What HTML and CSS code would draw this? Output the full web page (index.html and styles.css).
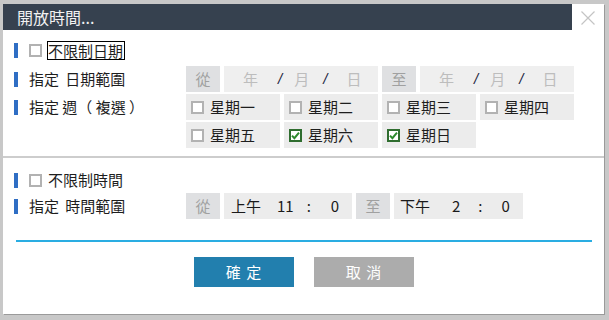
FILE: index.html
```html
<!DOCTYPE html>
<html lang="zh-Hant">
<head>
<meta charset="utf-8">
<title>開放時間</title>
<link rel="stylesheet" href="styles.css">
</head>
<body>
<div class="dialog">
  <div class="head">
    <div class="title">開放時間...</div>
    <div class="close">
      <svg width="16" height="16" viewBox="0 0 16 16"><path d="M1.5 1.5 L14.5 14.5 M14.5 1.5 L1.5 14.5" stroke="#c4c4c4" stroke-width="1.2" fill="none"/></svg>
    </div>
  </div>

  <div class="sec sec1">
    <div class="row">
      <div class="label"><i class="bar"></i><span class="cb"></span><span class="focus">不限制日期</span></div>
    </div>
    <div class="row r2">
      <div class="label"><i class="bar"></i><span class="wide">指定 日期範圍</span></div>
      <div class="fields">
        <div class="tag">從</div>
        <div class="date"><span class="ph y">年</span><span class="sl s1">/</span><span class="ph m">月</span><span class="sl s2">/</span><span class="ph d">日</span></div>
        <div class="tag">至</div>
        <div class="date"><span class="ph y">年</span><span class="sl s1">/</span><span class="ph m">月</span><span class="sl s2">/</span><span class="ph d">日</span></div>
      </div>
    </div>
    <div class="row r3">
      <div class="label"><i class="bar"></i><span>指定 週（ 複選 ）</span></div>
      <div class="weeks">
        <div class="wk"><span class="cb"></span>星期一</div>
        <div class="wk"><span class="cb"></span>星期二</div>
        <div class="wk"><span class="cb"></span>星期三</div>
        <div class="wk"><span class="cb"></span>星期四</div>
        <div class="wk"><span class="cb"></span>星期五</div>
        <div class="wk"><span class="cb on"><svg width="9" height="9" viewBox="0 0 9 9"><path d="M1 4.6 L3.4 7.2 L8 1.6" stroke="#2d8a2d" stroke-width="2" fill="none"/></svg></span>星期六</div>
        <div class="wk"><span class="cb on"><svg width="9" height="9" viewBox="0 0 9 9"><path d="M1 4.6 L3.4 7.2 L8 1.6" stroke="#2d8a2d" stroke-width="2" fill="none"/></svg></span>星期日</div>
      </div>
    </div>
  </div>

  <div class="sep"></div>

  <div class="sec sec2">
    <div class="row">
      <div class="label"><i class="bar"></i><span class="cb"></span><span class="plain">不限制時間</span></div>
    </div>
    <div class="row">
      <div class="label"><i class="bar"></i><span class="wide">指定 時間範圍</span></div>
      <div class="fields">
        <div class="tag">從</div>
        <div class="time t1"><span>上午</span><span class="hh">11</span><span class="co">:</span><span class="mm">0</span></div>
        <div class="tag">至</div>
        <div class="time t2"><span>下午</span><span class="hh">2</span><span class="co">:</span><span class="mm">0</span></div>
      </div>
    </div>
  </div>

  <div class="bline"></div>

  <div class="btns">
    <button class="btn ok">確 定</button>
    <button class="btn cancel">取 消</button>
  </div>
</div>
</body>
</html>
```

FILE: styles.css
```css
html, body {
  margin: 0;
  padding: 0;
}
body {
  width: 609px;
  height: 320px;
  overflow: hidden;
  background: #c8c8c8;
  padding: 4px 0 0 3px;
  box-sizing: border-box;
  font-family: "Noto Sans CJK TC", "Noto Sans CJK SC", sans-serif;
  font-size: 15px;
  color: #1e1e1e;
}
.dialog {
  width: 601px;
  height: 310px;
  background: #fff;
  box-shadow: 1px 1px 0 #9a9a9a;
}
.head {
  display: flex;
  height: 26px;
}
.title {
  width: 569px;
  background: #36414f;
  color: #f2f2f2;
  font-size: 16px;
  line-height: 26px;
  padding-left: 14px;
  box-sizing: border-box;
}
.close {
  flex: 1;
  display: flex;
  justify-content: center;
  padding-top: 6px;
  box-sizing: border-box;
}
.sec1 {
  padding-top: 7px;
}
.row {
  display: flex;
  align-items: flex-start;
}
.r2 {
  margin-top: 3px;
}
.r3 {
  margin-top: 2px;
}
.label {
  width: 183px;
  height: 26px;
  padding-left: 11px;
  box-sizing: border-box;
  display: flex;
  align-items: center;
  line-height: 18px;
  white-space: pre;
}
.bar {
  display: block;
  width: 4px;
  height: 15px;
  background: #2f6ec4;
  margin-right: 11px;
}
.wide {
  word-spacing: 3px;
}
.cb {
  display: inline-flex;
  align-items: center;
  justify-content: center;
  width: 13px;
  height: 13px;
  box-sizing: border-box;
  border: 2px solid #b2b2b2;
  background: #fff;
  flex: none;
}
.label .cb {
  margin-right: 5px;
}
.cb.on {
  border-color: #2f6d2f;
}
.focus {
  border: 1px solid #000;
  padding: 0 1px 0 0;
  line-height: 17px;
}
.plain {
  margin-left: 1px;
}
.fields {
  display: flex;
  gap: 4px;
  height: 26px;
}
.tag {
  width: 34px;
  height: 26px;
  background: #dfe0e2;
  color: #a0a0a0;
  text-align: center;
  line-height: 26px;
}
.date {
  width: 154px;
  height: 26px;
  background: #efefef;
  display: flex;
  align-items: center;
  line-height: 26px;
  padding-left: 19px;
  box-sizing: border-box;
}
.ph {
  color: #bdbdbd;
}
.sl {
  color: #1c2540;
  font-family: "Liberation Sans", sans-serif;
  font-style: italic;
}
.date .s1 { margin-left: 20px; }
.date .m { margin-left: 12px; }
.date .s2 { margin-left: 14px; }
.date .d { margin-left: 19px; }
.weeks {
  display: grid;
  grid-template-columns: repeat(4, 94px);
  grid-auto-rows: 26px;
  gap: 2px 4px;
}
.wk {
  background: #ececec;
  display: flex;
  align-items: center;
  padding-left: 5px;
  line-height: 26px;
}
.wk .cb {
  margin-right: 6px;
}
.sep {
  margin-top: 8px;
  height: 2px;
  background: #cdcdcd;
}
.sec2 {
  padding-top: 9px;
}
.time {
  height: 26px;
  background: #ececec;
  display: flex;
  align-items: center;
  line-height: 26px;
  color: #1a1a1a;
  box-sizing: border-box;
}
.t1 { width: 128px; padding-left: 7px; }
.t1 .hh { margin-left: 16px; }
.t1 .co { margin-left: 13px; }
.t1 .mm { margin-left: 20px; }
.t2 { width: 129px; padding-left: 6px; }
.t2 .hh { margin-left: 22px; }
.t2 .co { margin-left: 18px; }
.t2 .mm { margin-left: 19px; }
.bline {
  margin: 21px 12px 0 13px;
  height: 2px;
  background: #2aade2;
}
.btns {
  margin-top: 15px;
  display: flex;
  justify-content: center;
  gap: 20px;
}
.btn {
  width: 100px;
  height: 30px;
  border: none;
  padding: 0;
  color: #fff;
  font-family: "Noto Sans CJK TC", "Noto Sans CJK SC", sans-serif;
  font-size: 15px;
  line-height: 30px;
  word-spacing: 2px;
}
.ok {
  background: #227fae;
}
.cancel {
  background: #acacac;
}
```
